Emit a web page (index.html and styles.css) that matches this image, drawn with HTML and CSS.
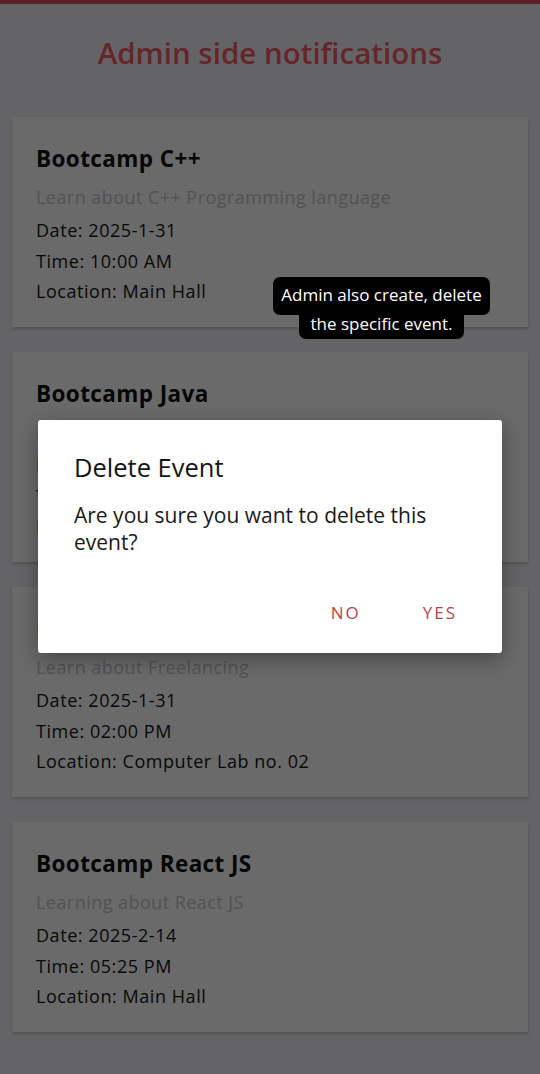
FILE: index.html
```html
<!DOCTYPE html>
<html>
<head>
<meta charset="utf-8">
<link rel="stylesheet" href="styles.css">
</head>
<body>
<div class="topbar"></div>
<main class="page">
  <h1 class="title">Admin side notifications</h1>
  <section class="list">
    <article class="card">
      <h2 class="card-title">Bootcamp C++</h2>
      <p class="desc">Learn about C++ Programming language</p>
      <p class="line">Date: 2025-1-31</p>
      <p class="line">Time: 10:00 AM</p>
      <p class="line">Location: Main Hall</p>
    </article>
    <article class="card">
      <h2 class="card-title">Bootcamp Java</h2>
      <p class="desc">Learn about Java Programming language</p>
      <p class="line">Date: 2025-1-31</p>
      <p class="line">Time: 12:00 PM</p>
      <p class="line">Location: Main Hall</p>
    </article>
    <article class="card">
      <h2 class="card-title">Bootcamp Freelancing</h2>
      <p class="desc">Learn about Freelancing</p>
      <p class="line">Date: 2025-1-31</p>
      <p class="line">Time: 02:00 PM</p>
      <p class="line">Location: Computer Lab no. 02</p>
    </article>
    <article class="card">
      <h2 class="card-title">Bootcamp React JS</h2>
      <p class="desc">Learning about React JS</p>
      <p class="line">Date: 2025-2-14</p>
      <p class="line">Time: 05:25 PM</p>
      <p class="line">Location: Main Hall</p>
    </article>
  </section>
</main>

<div class="note">
  <span class="note-line">Admin also create, delete</span>
  <span class="note-line second">the specific event.</span>
</div>

<div class="dialog">
  <h3 class="dialog-title">Delete Event</h3>
  <p class="dialog-text">Are you sure you want to delete this event?</p>
  <div class="actions">
    <button class="btn">NO</button>
    <button class="btn">YES</button>
  </div>
</div>
</body>
</html>
```
FILE: styles.css
```css
* { box-sizing: border-box; }
html, body { margin: 0; padding: 0; }
body {
  background: #646466;
  font-family: "Open Sans", "Noto Sans", sans-serif;
  color: #070707;
  width: 540px;
  height: 1074px;
  overflow: hidden;
}
.topbar {
  height: 4px;
  background: #5b1f25;
}
.page {
  padding: 0 12px;
}
.title {
  margin: 0;
  height: 113px;
  padding-top: 29px;
  text-align: center;
  font-size: 29.5px;
  line-height: 40px;
  font-weight: 600;
  color: #66252b;
}
.list {
  display: flex;
  flex-direction: column;
  gap: 25px;
}
.card {
  height: 210px;
  background: #6a6a6b;
  box-shadow: 0 2px 3px rgba(0,0,0,0.18);
  padding: 28px 24px 0;
}
.card-title {
  margin: 0;
  font-size: 22.5px;
  letter-spacing: 0.4px;
  line-height: 28px;
  font-weight: 700;
  color: #060606;
}
.desc {
  margin: 11px 0 5px;
  font-size: 18px;
  letter-spacing: 0.45px;
  line-height: 26px;
  color: #525253;
}
.line {
  margin: 0;
  font-size: 18px;
  letter-spacing: 0.55px;
  line-height: 30.5px;
  color: #080808;
}
.note {
  position: absolute;
  left: 273px;
  top: 277px;
  width: 217px;
  display: flex;
  flex-direction: column;
  align-items: center;
  font-family: "Open Sans", sans-serif;
  font-size: 17px;
  color: #fff;
}
.note-line {
  background: #000;
  border-radius: 7px;
  padding: 0;
  height: 38px;
  line-height: 36px;
  width: 217px;
  text-align: center;
  white-space: nowrap;
}
.note-line.second {
  width: 165px;
  height: 24px;
  line-height: 18px;
  border-radius: 0 0 7px 7px;
}
.dialog {
  position: absolute;
  left: 38px;
  top: 420px;
  width: 464px;
  height: 233px;
  background: #fff;
  border-radius: 3px;
  padding: 30px 36px 0;
  box-shadow: 0 6px 20px rgba(0,0,0,0.35);
}
.dialog-title {
  margin: 0;
  font-size: 25.5px;
  line-height: 34px;
  font-weight: 400;
  color: #151515;
}
.dialog-text {
  margin: 18px 0 0;
  font-size: 21px;
  line-height: 27px;
  color: #1a1a1a;
  padding-right: 10px;
}
.actions {
  display: flex;
  justify-content: flex-end;
  gap: 62px;
  margin-top: 45px;
  padding-right: 9px;
}
.btn {
  background: none;
  border: 0;
  padding: 0;
  font-family: "Open Sans", sans-serif;
  font-size: 17px;
  letter-spacing: 2px;
  color: #b3464e;
  line-height: 24px;
}
```
